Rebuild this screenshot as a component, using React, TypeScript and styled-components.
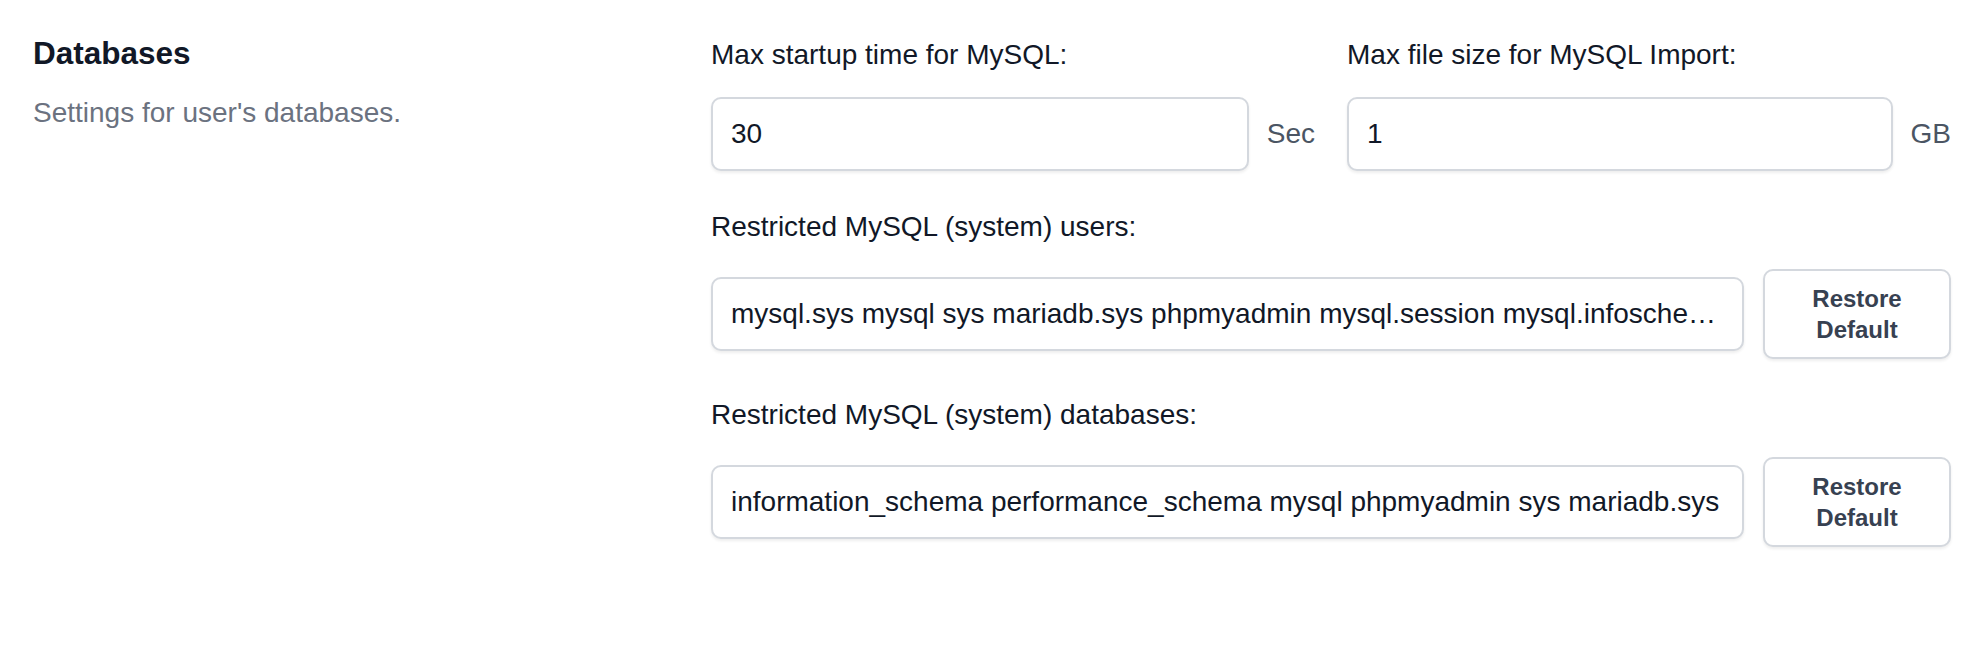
import styled, { createGlobalStyle } from 'styled-components';

const GlobalStyle = createGlobalStyle`
  html, body {
    margin: 0;
    padding: 0;
    background: #ffffff;
  }
  body {
    font-family: "Liberation Sans", Arial, sans-serif;
    color: #111827;
  }
  * {
    box-sizing: border-box;
  }
`

interface IUnitFieldProps {
    label: string
    value: string
    unit: string
}

interface IListFieldProps {
    label: string
    value: string
}

const UnitField = ({ label, value, unit }: IUnitFieldProps) => {
    return <Field>
        <Label>{label}</Label>
        <InputRow>
            <TextInput type="text" defaultValue={value} />
            <Unit>{unit}</Unit>
        </InputRow>
    </Field>
}

const ListField = ({ label, value }: IListFieldProps) => {
    return <Field>
        <Label>{label}</Label>
        <InputRow $gap={19}>
            <TextInput type="text" defaultValue={value} />
            <RestoreButton type="button">Restore Default</RestoreButton>
        </InputRow>
    </Field>
}

const App = () => {
    return <>
        <GlobalStyle />
        <Section>
            <Intro>
                <Title>Databases</Title>
                <Description>Settings for user's databases.</Description>
            </Intro>
            <Form>
                <TwoCols>
                    <UnitField label="Max startup time for MySQL:" value="30" unit="Sec" />
                    <UnitField label="Max file size for MySQL Import:" value="1" unit="GB" />
                </TwoCols>
                <ListField
                    label="Restricted MySQL (system) users:"
                    value="mysql.sys mysql sys mariadb.sys phpmyadmin mysql.session mysql.infoschema debian-sys-maint"
                />
                <ListField
                    label="Restricted MySQL (system) databases:"
                    value="information_schema performance_schema mysql phpmyadmin sys mariadb.sys"
                />
            </Form>
        </Section>
    </>
}

const Section = styled.div`
  display: grid;
  grid-template-columns: 636px 1fr;
  column-gap: 42px;
  padding: 29px 33px 40px 33px;
  width: 100%;
`

const Intro = styled.div`
  display: flex;
  flex-direction: column;
`

const Title = styled.h3`
  margin: 0;
  font-size: 31.5px;
  line-height: 49px;
  font-weight: 700;
  color: #111827;
`

const Description = styled.p`
  margin: 14px 0 0 0;
  font-size: 28px;
  line-height: 42px;
  color: #6b7280;
`

const Form = styled.div`
  display: flex;
  flex-direction: column;
  gap: 35px;
  padding-top: 5px;
`

const TwoCols = styled.div`
  display: grid;
  grid-template-columns: 1fr 1fr;
  column-gap: 32px;
`

const Field = styled.div`
  display: flex;
  flex-direction: column;
  gap: 21px;
  min-width: 0;
`

const Label = styled.label`
  font-size: 28px;
  line-height: 42px;
  color: #111827;
`

const InputRow = styled.div<{ $gap?: number }>`
  display: flex;
  align-items: center;
  gap: ${(props) => props.$gap ?? 17.5}px;
`

const TextInput = styled.input`
  flex: 1;
  min-width: 0;
  height: 74px;
  padding: 0 18px;
  border: 2px solid #d4d8de;
  border-radius: 10px;
  background: #ffffff;
  box-shadow: 0 2px 3px rgba(0, 0, 0, 0.07);
  font-family: "Liberation Sans", Arial, sans-serif;
  font-size: 28px;
  color: #111827;
  text-overflow: ellipsis;
  white-space: nowrap;
  overflow: hidden;
  outline: none;
`

const Unit = styled.span`
  font-size: 28px;
  line-height: 42px;
  color: #4b5563;
  white-space: nowrap;
`

const RestoreButton = styled.button`
  flex: none;
  width: 188px;
  height: 90px;
  padding: 0 20px;
  border: 2px solid #d4d8de;
  border-radius: 10px;
  background: #ffffff;
  box-shadow: 0 2px 3px rgba(0, 0, 0, 0.07);
  font-family: "Liberation Sans", Arial, sans-serif;
  font-size: 24px;
  line-height: 31px;
  font-weight: 700;
  color: #374151;
  text-align: center;
  cursor: pointer;
`

export default App
